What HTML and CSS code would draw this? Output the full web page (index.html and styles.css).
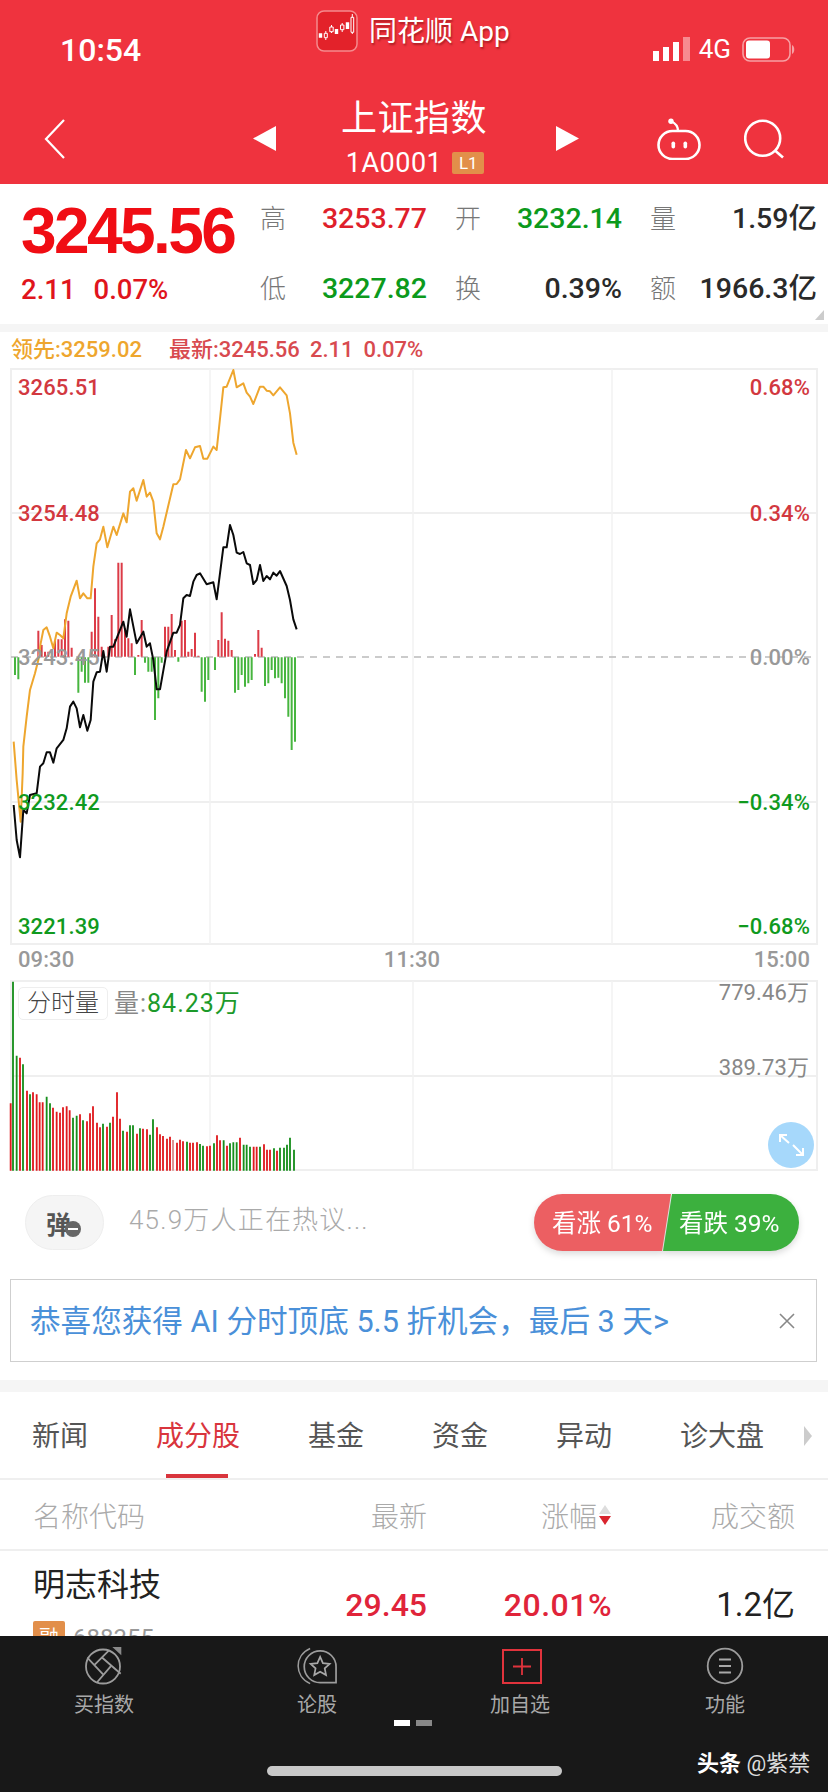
FILE: index.html
```html
<!DOCTYPE html>
<html lang="zh-CN">
<head>
<meta charset="utf-8">
<title>上证指数</title>
<link rel="stylesheet" href="styles.css">
</head>
<body>
<div class="app">
  <div class="page">
    <header class="header">
      <div class="status">
        <span class="clock">10:54</span>
        <div class="source">
          <svg class="logo" viewBox="0 0 42 42">
            <rect x="1" y="1" width="40" height="40" rx="7" fill="#e3222a" stroke="#f58a8d" stroke-width="1.500"/>
            <path d="M2.800 23.300h3.400v4.400H2.800zM18.800 19h3.400v5h-3.400zM29.800 12.300h3.400V19h-3.400z" fill="#fff"/>
            <path d="M8.300 23.300h3v4.400h-3zM9.800 21v2.300M9.800 27.700V30M13.800 17h3.400v4.700h-3.400zM15.500 15v2M15.500 21.700V23M24.500 15h3.400v4.700h-3.400zM26.200 13v2M26.200 19.700V22M35 7.300h2.700v15H35zM36.300 4v3.300M36.300 22.300V24" fill="none" stroke="#fff" stroke-width="1"/>
          </svg>
          <span class="source-name">同花顺 App</span>
        </div>
        <div class="sys">
          <svg class="signal" viewBox="0 0 37 24">
            <path d="M0 14h6v10H0zM10 10h6v14h-6zM20 5h6v19h-6z" fill="#fff"/>
            <path d="M30 0h7v24h-7z" fill="#f78a90"/>
          </svg>
          <span class="net">4G</span>
          <svg class="battery" viewBox="0 0 53 25">
            <rect x="1" y="1" width="47" height="23" rx="7" fill="none" stroke="#f7a0a4" stroke-width="1.600"/>
            <rect x="4" y="3.500" width="24" height="18" rx="3" fill="#fff"/>
            <path d="M50 8c3 1 3 8 0 9z" fill="#f7a0a4"/>
          </svg>
        </div>
      </div>
      <nav class="nav">
        <svg class="back" viewBox="0 0 22 40"><path d="M20 1 2 20l18 19" fill="none" stroke="#fff" stroke-width="2.200"/></svg>
        <svg class="tri tri-l" viewBox="0 0 23 25"><path d="M23 0v25L0 12.500z" fill="#fff"/></svg>
        <div class="title">
          <span class="title-name">上证指数</span>
          <span class="title-code">1A0001<span class="lv">L1</span></span>
        </div>
        <svg class="tri tri-r" viewBox="0 0 23 25"><path d="M0 0v25l23-12.500z" fill="#fff"/></svg>
        <svg class="robot" viewBox="0 0 44 42">
          <path d="M21 13C21 8 18 5 14 3.300" fill="none" stroke="#fff" stroke-width="2.200"/>
          <circle cx="14" cy="3.300" r="2.700" fill="#fff"/>
          <rect x="1.500" y="13" width="41" height="28" rx="14" fill="none" stroke="#fff" stroke-width="2.600"/>
          <rect x="14.500" y="23.500" width="3.600" height="7" rx="1.800" fill="#fff"/>
          <rect x="26.500" y="23.500" width="3.600" height="7" rx="1.800" fill="#fff"/>
        </svg>
        <svg class="search" viewBox="0 0 42 40">
          <circle cx="18.700" cy="19.300" r="17.500" fill="none" stroke="#fff" stroke-width="2.600"/>
          <path d="m31 31.500 8 7" stroke="#fff" stroke-width="2.600"/>
        </svg>
      </nav>
    </header>

    <section class="quote">
      <div class="last">
        <span class="last-price">3245.56</span>
        <span class="last-change"><span>2.11</span><span>0.07%</span></span>
      </div>
      <div class="stats">
        <span class="k">高</span><span class="v up">3253.77</span>
        <span class="k">开</span><span class="v down">3232.14</span>
        <span class="k">量</span><span class="v">1.59亿</span>
        <span class="k">低</span><span class="v down">3227.82</span>
        <span class="k">换</span><span class="v">0.39%</span>
        <span class="k">额</span><span class="v">1966.3亿</span>
      </div>
      <i class="corner"></i>
    </section>

    <section class="chart">
      <div class="legend">
        <span class="lead">领先:3259.02</span>
        <span class="newest"><span>最新:3245.56</span><span>2.11</span><span>0.07%</span></span>
      </div>
      <svg class="price-svg" viewBox="0 365 828 610">
        <path class="grid" d="M11 369H817V944H11zM11 513H817M11 802H817"/>
        <path class="grid-v" d="M210 369V944M413 369V944M612 369V944"/>
        <path class="dash" d="M11 657H817"/>
        <g transform="translate(0 350) scale(.33333)">
          <path class="bar-r" d="M115 920v-78M125 920v-35M135 920v-15M145 920v-15M165 920v-50M175 920v-52M185 920v-52M195 920v-112M205 920v-108M215 920v-27M275 920v-75M285 920v-205M295 920v-120M305 920v-30M325 920v-30M335 920v-125M345 920v-52M355 920v-282M365 920v-282M375 920v-85M385 920v-55M395 920v-40M415 920v-5M425 920v-110M495 920v-90M505 920v-90M515 920v-128M525 920v-20M545 920v-108M555 920v-110M565 920v-15M575 920v-23M585 920v-72M595 920v-3M655 920v-50M665 920v-133M675 920v-54M685 920v-48M695 920v-20M765 920v-8M775 920v-80M785 920v-27"/>
          <path class="bar-g" d="M45 922v53M55 922v66M235 922v106M245 922v43M255 922v76M265 922v76M405 922v53M435 922v16M445 922v43M455 922v43M465 922v188M475 922v123M485 922v16M535 922v13M605 922v103M615 922v133M625 922v68M645 922v38M705 922v106M715 922v98M725 922v53M735 922v88M745 922v78M755 922v68M795 922v86M805 922v78M815 922v38M825 922v63M835 922v61M845 922v78M855 922v123M865 922v178M875 922v278M885 922v253"/>
          <path class="line-o" d="M41 1175 50 1290 62 1415 68 1270 70 1190 80 1100 90 1020 105 970 115 930 122 880 130 840 140 832 150 860 160 895 170 848 180 855 190 865 200 790 212 740 230 692 240 745 250 730 262 745 272 745 280 650 290 580 300 568 310 530 322 592 340 530 350 555 370 490 380 517 390 425 400 415 410 452 430 390 440 440 450 428 460 455 470 550 480 568 490 530 520 403 530 402 540 388 558 300 570 325 585 292 600 288 610 326 622 326 640 290 650 300 670 112 680 110 700 60 710 112 730 100 740 128 750 140 760 162 780 110 790 110 800 122 810 124 820 136 840 112 860 136 870 190 880 278 890 314"/>
          <path class="line-k" d="M41 1365 50 1470 60 1522 70 1380 80 1390 90 1335 110 1330 120 1250 130 1240 140 1207 150 1207 160 1238 170 1195 190 1170 200 1135 210 1070 220 1055 230 1075 240 1132 250 1095 262 1142 272 1110 280 995 290 967 300 965 310 903 320 965 330 890 340 890 370 815 380 860 390 778 410 880 430 845 440 890 450 880 460 930 470 1018 480 1018 500 905 520 848 530 848 540 825 550 745 560 735 570 738 580 695 590 675 600 670 620 703 640 697 650 748 670 592 680 592 690 525 700 555 710 608 720 612 730 606 740 640 750 645 760 702 770 690 780 645 790 693 800 678 810 688 820 668 830 677 840 663 860 708 870 750 880 808 890 838"/>
        </g>
        <text class="ax ax-r" x="18" y="395">3265.51</text>
        <text class="ax ax-r" x="18" y="521">3254.48</text>
        <text class="ax ax-n" x="18" y="665">3243.45</text>
        <text class="ax ax-g" x="18" y="810">3232.42</text>
        <text class="ax ax-g" x="18" y="934">3221.39</text>
        <text class="ax ax-r end" x="810" y="395">0.68%</text>
        <text class="ax ax-r end" x="810" y="521">0.34%</text>
        <text class="ax ax-n end" x="810" y="665">0.00%</text>
        <text class="ax ax-g end" x="810" y="810">−0.34%</text>
        <text class="ax ax-g end" x="810" y="934">−0.68%</text>
        <text class="ax ax-n" x="18" y="967">09:30</text>
        <text class="ax ax-n mid" x="412" y="967">11:30</text>
        <text class="ax ax-n end" x="810" y="967">15:00</text>
      </svg>
      <div class="vol">
        <svg class="vol-svg" viewBox="0 975 828 197">
          <path class="grid" d="M11 981H817V1170H11zM11 1076H817"/>
          <path class="grid-v" d="M210 981V1170M413 981V1170M612 981V1170"/>
          <g transform="translate(0 970) scale(.33333)">
            <path class="vr" d="M32 602V400M60 602V263M81 602V362M99 602V367M110 602V373M119 602V397M128 602V397M159 602V413M170 602V425M180 602V428M189 602V412M200 602V409M209 602V421M240 602V433M261 602V454M270 602V430M279 602V409M291 602V458M300 602V472M321 602V470M339 602V440M351 602V367M360 602V446M381 602V485M411 602V491M429 602V476M441 602V478M471 602V472M480 602V493M489 602V498M501 602V506M510 602V500M531 602V518M540 602V509M549 602V514M570 602V518M579 602V518M591 602V517M621 602V529M630 602V527M651 602V496M660 602V511M681 602V527M720 602V503M761 602V530M770 602V530M792 602V523M801 602V539M810 602V539M831 602V542"/>
            <path class="vr vr-faint" d="M519 602V510"/>
            <path class="vg" d="M39 602V35M50 602V257M69 602V283M90 602V373M140 602V380M150 602V400M219 602V443M230 602V437M249 602V451M309 602V461M330 602V458M369 602V482M390 602V466M399 602V466M420 602V475M450 602V494M459 602V448M561 602V515M600 602V522M609 602V527M642 602V520M671 602V511M690 602V520M700 602V517M710 602V517M731 602V524M740 602V524M750 602V530M780 602V530M822 602V535M840 602V533M852 602V533M861 602V524M870 602V503M882 602V539"/>
          </g>
          <text class="ax ax-m end" x="809" y="1000">779.46万</text>
          <text class="ax ax-m end" x="809" y="1075">389.73万</text>
        </svg>
        <div class="vol-tag">
          <span class="vol-type">分时量</span>
          <span class="vol-val"><b>量:</b>84.23万</span>
        </div>
        <svg class="expand" viewBox="0 0 46 46">
          <circle cx="23" cy="23" r="23" fill="#a6d8fb"/>
          <path d="m12 13 9 8M12 20v-7h7M35 33l-10-10M35 26v7h-7" fill="none" stroke="#fff" stroke-width="2"/>
        </svg>
      </div>
    </section>

    <section class="social">
      <div class="danmu"><span>弹</span><i class="danmu-off"></i></div>
      <span class="hot">45.9万人正在热议...</span>
      <div class="vote">
        <span class="vote-up">看涨 61%</span>
        <span class="vote-down">看跌 39%</span>
      </div>
    </section>

    <div class="promo">
      <span class="promo-text">恭喜您获得 AI 分时顶底 5.5 折机会，最后 3 天&gt;</span>
      <svg class="close" viewBox="0 0 16 16"><path d="m1 1 14 14M15 1 1 15" stroke="#888" stroke-width="1.600"/></svg>
    </div>

    <div class="band"></div>

    <div class="tabs">
      <span class="tab t1">新闻</span>
      <span class="tab on">成分股</span>
      <span class="tab">基金</span>
      <span class="tab">资金</span>
      <span class="tab">异动</span>
      <span class="tab">诊大盘</span>
      <i class="tab-more"></i>
    </div>

    <div class="row thead">
      <span class="c-name">名称代码</span>
      <span class="c-a">最新</span>
      <span class="c-b">涨幅<i class="sort"><i class="s-up"></i><i class="s-down"></i></i></span>
      <span class="c-c">成交额</span>
    </div>

    <div class="row item">
      <div class="c-name">
        <span class="stock">明志科技</span>
        <span class="code"><i class="rong">融</i>688355</span>
      </div>
      <span class="c-a num up2">29.45</span>
      <span class="c-b num up2 wide">20.01%</span>
      <span class="c-c num dark">1.2亿</span>
    </div>
  </div>

  <footer class="bottom">
    <div class="actions">
      <div class="act">
        <svg viewBox="0 0 40 38">
          <circle cx="19" cy="19.500" r="17" fill="none" stroke="#9c9c9c" stroke-width="1.800"/>
          <path d="M3.300 10.700 20 28.300M10 18.300l15-15M18.300 10.700l18.400 16M26.700 19.300 13.300 35" fill="none" stroke="#9c9c9c" stroke-width="1.800"/>
          <path d="M28.300 0h9v8.300z" fill="#8a8a8a"/>
        </svg>
        <span>买指数</span>
      </div>
      <div class="act">
        <svg viewBox="0 0 42 38">
          <path d="M13.800.7C-3 8-3 30 13.800 37.500" fill="none" stroke="#9c9c9c" stroke-width="1.600"/>
          <path d="M41 36.500H24.300A16.700 16.700 0 1 1 41 19.800z" fill="none" stroke="#9c9c9c" stroke-width="1.800"/>
          <path d="M24.300 9.500 27.200 16 34.300 16.800 29.100 21.500 30.500 28.500 24.300 25 18.100 28.500 19.500 21.500 14.300 16.800 21.400 16z" fill="none" stroke="#a8a8a8" stroke-width="1.800"/>
        </svg>
        <span>论股</span>
      </div>
      <div class="act act-add">
        <svg viewBox="0 0 40 38"><rect x="1" y="3" width="38" height="33" fill="none" stroke="#e0333c" stroke-width="2"/><path d="M20 11v17M11 19.500h18" stroke="#e0333c" stroke-width="1.800"/></svg>
        <span>加自选</span>
      </div>
      <div class="act act-last">
        <svg viewBox="0 0 40 38"><circle cx="20" cy="19" r="17.300" fill="none" stroke="#9c9c9c" stroke-width="1.800"/><path d="M14 12.500h12M14 19h12M14 25.500h12" stroke="#a8a8a8" stroke-width="1.800"/></svg>
        <span>功能</span>
      </div>
    </div>
    <div class="dots"><i class="dot on"></i><i class="dot"></i></div>
    <div class="home"></div>
    <span class="mark"><b>头条</b> @紫禁</span>
  </footer>
</div>
</body>
</html>
```
FILE: styles.css
```css
* { box-sizing: border-box; }
html, body { margin: 0; padding: 0; background: #fff; }
body { font-family: Roboto, "Noto Sans CJK SC", sans-serif; color: #222; }
i { font-style: normal; display: block; }
svg { display: block; }
.app { width: 828px; height: 1792px; display: flex; flex-direction: column; overflow: hidden; }
.page { flex: 1; overflow: hidden; min-height: 0; }

.header { height: 184px; background: #ef333e; color: #fff; display: flex; flex-direction: column; }
.status { height: 78px; display: grid; grid-template-columns: 316px auto 1fr; }
.clock { font-size: 32px; font-weight: 500; padding: 31px 0 0 60px; line-height: 38px; }
.source { display: flex; align-items: flex-start; padding-top: 10px; gap: 11px; }
.logo { width: 42px; height: 42px; }
.source-name { font-size: 28px; line-height: 44px; color: #fff; text-shadow: 1px 2px 2px rgba(90,0,0,.45); }
.sys { display: flex; justify-content: flex-end; align-items: center; padding: 20px 33px 0 0; gap: 9px; height: 78px; }
.signal { width: 37px; height: 24px; }
.net { font-size: 26px; line-height: 28px; }
.battery { width: 53px; height: 25px; margin-left: 2px; }

.nav { height: 106px; display: flex; align-items: flex-start; }
.back { width: 22px; height: 40px; margin: 41px 0 0 44px; }
.tri { width: 23px; height: 25px; margin-top: 48px; }
.tri-l { margin-left: 187px; }
.title { width: 280px; display: flex; flex-direction: column; align-items: center; }
.title-name { font-size: 36px; line-height: 50px; margin-top: 16px; padding-right: 4px; letter-spacing: .5px; }
.title-code { font-size: 27px; line-height: 34px; margin-top: 2px; display: flex; align-items: center; gap: 10px; color: #fff; padding-right: 2px; letter-spacing: .5px; }
.lv { display: block; background: #e28f4a; font-size: 17px; line-height: 22px; width: 32px; height: 22px; text-align: center; border-radius: 2px; letter-spacing: 0; }
.robot { width: 44px; height: 42px; margin: 40px 0 0 78px; }
.search { width: 42px; height: 40px; margin: 41px 0 0 43px; }

.quote { height: 140px; position: relative; display: flex; background: #fff; }
.last { width: 260px; padding-left: 21px; display: flex; flex-direction: column; }
.last-price { font-family: "Liberation Sans", sans-serif; font-size: 64px; font-weight: 700; color: #f00d14; line-height: 66px; margin-top: 14px; letter-spacing: -2.600px; }
.last-change { display: flex; gap: 18px; font-size: 27.500px; font-weight: 500; line-height: 34px; color: #e0141c; margin-top: 9px; }
.stats { display: grid; grid-template-columns: 26px 141px 54px 141px 54px 141px; grid-auto-rows: 70px; align-items: center; align-content: start; flex: 1; }
.k { font-size: 26px; color: #777; font-weight: 300; line-height: 70px; text-align: right; }
.v { font-size: 28.500px; text-align: right; line-height: 70px; color: #2a2a2a; font-weight: 500; }
.v.up { color: #df1f2b; }
.v.down { color: #0c9a1c; }
.corner { position: absolute; right: 4px; bottom: 4px; width: 0; height: 0; border-left: 9px solid transparent; border-bottom: 10px solid #ccc; }

.chart { border-top: 8px solid #f5f5f5; }
.legend { height: 33px; display: flex; padding-left: 11px; gap: 27px; font-size: 22px; font-weight: 500; line-height: 36px; }
.lead { color: #eea62e; }
.newest { color: #d84a4f; display: flex; gap: 10px; }
.price-svg { width: 828px; height: 610px; }
.grid { fill: none; stroke: #efefef; stroke-width: 2; }
.grid-v { fill: none; stroke: #f2f2f2; stroke-width: 1.500; }
.dash { fill: none; stroke: #bbb; stroke-width: 1.500; stroke-dasharray: 7 6; }
.bar-r { fill: none; stroke: #dc3b47; stroke-width: 6; }
.bar-g { fill: none; stroke: #47b53f; stroke-width: 6; }
.line-o { fill: none; stroke: #eea62e; stroke-width: 6; stroke-linejoin: round; }
.line-k { fill: none; stroke: #0a0a0a; stroke-width: 6; stroke-linejoin: round; }
.ax { font-family: Roboto, "Noto Sans CJK SC", sans-serif; font-size: 22px; font-weight: 500; letter-spacing: .1px; }
.ax-r { fill: #d2383f; }
.ax-g { fill: #109a1e; }
.ax-n { fill: #999; }
.ax-m { fill: #888; font-weight: 400; }
.end { text-anchor: end; }
.mid { text-anchor: middle; }
.vol { position: relative; height: 197px; }
.vol-svg { width: 828px; height: 197px; }
.vr { fill: none; stroke: #e01a1e; stroke-width: 5.500; }
.vr-faint { stroke: #d98a8a; }
.vg { fill: none; stroke: #178f1c; stroke-width: 5.500; }
.vol-tag { position: absolute; left: 18px; top: 12px; display: flex; align-items: center; gap: 6px; }
.vol-type { width: 90px; height: 33px; border: 1px solid #eee; border-radius: 5px; background: #fff; font-size: 24px; line-height: 31px; text-align: center; color: #444; font-weight: 300; }
.vol-val { font-size: 25px; color: #1c9a2a; letter-spacing: 1px; line-height: 30px; }
.vol-val b { font-weight: 400; color: #888; }
.expand { position: absolute; left: 768px; top: 147px; width: 46px; height: 46px; }

.social { height: 107px; display: flex; align-items: center; padding: 0 0 6px 25px; }
.danmu { width: 79px; height: 55px; border-radius: 28px; background: #f5f5f5; border: 1px solid #eee; display: flex; align-items: center; justify-content: center; position: relative; font-size: 25px; color: #555; font-weight: 700; padding-right: 12px; }
.danmu-off { position: absolute; left: 39px; top: 25px; width: 16px; height: 16px; border-radius: 50%; background: #666; }
.danmu-off::after { content: ""; display: block; width: 10px; height: 2px; margin: 7px 3px; background: #fff; }
.hot { font-size: 26px; line-height: 34px; color: #aaa; margin-left: 25px; width: 405px; letter-spacing: 1.200px; font-weight: 300; padding-bottom: 6px; height: 40px; }
.vote { display: flex; height: 57px; filter: drop-shadow(0 3px 3px rgba(0,0,0,.14)); color: #fff; font-size: 24.500px; line-height: 59px; white-space: nowrap; }
.vote-up { width: 137px; background: #ec5f62; border-radius: 29px 0 0 29px; clip-path: polygon(0 0, 100% 0, calc(100% - 9px) 100%, 0 100%); padding-left: 18px; }
.vote-down { width: 136px; margin-left: -8px; background: #3cb03e; border-radius: 0 29px 29px 0; clip-path: polygon(9px 0, 100% 0, 100% 100%, 0 100%); padding-left: 16px; }

.promo { height: 83px; margin: 0 11px 0 10px; border: 1.500px solid #cfcfcf; display: flex; align-items: center; padding: 0 21px 3px 19px; justify-content: space-between; }
.promo-text { font-size: 30.600px; color: #4a90d9; font-weight: 400; }
.close { width: 16px; height: 16px; margin-top: 3px; }
.band { height: 12px; margin-top: 18px; background: #f5f5f5; }

.tabs { height: 88px; border-bottom: 2px solid #efefef; position: relative; display: flex; gap: 68px; padding: 0 0 0 32px; }
.tab { font-size: 28px; line-height: 90px; color: #555; font-weight: 400; }
.tab.on { color: #d9353d; position: relative; }
.tab.on::after { content: ""; position: absolute; left: 10px; width: 62px; bottom: 0; height: 4px; background: #d9353d; }
.tab-more { position: absolute; left: 804px; top: 34px; width: 0; height: 0; border-left: 8px solid #ccc; border-top: 10px solid transparent; border-bottom: 10px solid transparent; }

.row { display: grid; grid-template-columns: 254px 140px 185px 183px; padding-left: 33px; align-items: center; }
.thead { height: 71px; border-bottom: 2px solid #efefef; font-size: 28px; color: #aaa; font-weight: 300; }
.c-a, .c-b, .c-c { text-align: right; }
.c-b { display: flex; justify-content: flex-end; align-items: center; gap: 2px; }
.sort { width: 13px; display: flex; flex-direction: column; gap: 2px; }
.s-up, .s-down { width: 0; height: 0; border-left: 6px solid transparent; border-right: 6px solid transparent; }
.s-up { border-bottom: 9px solid #ddd; }
.s-down { border-top: 9px solid #d9252e; }
.item { height: 140px; align-items: start; }
.stock { display: block; font-size: 32px; line-height: 44px; margin-top: 12px; color: #222; font-weight: 400; }
.code { display: flex; gap: 8px; align-items: center; margin-top: 14px; font-size: 24px; color: #999; line-height: 34px; }
.rong { width: 32px; height: 34px; background: #e28f4a; color: #fff; font-size: 20px; text-align: center; line-height: 34px; border-radius: 2px; }
.num { font-size: 32px; line-height: 40px; margin-top: 34px; font-weight: 500; }
.wide { letter-spacing: .5px; }
.up2 { color: #e0243a; }
.dark { color: #222; font-weight: 400; font-size: 33px; }

.bottom { height: 156px; background: #181818; position: relative; flex: none; }
.actions { display: grid; grid-template-columns: 208px 218px 188px 214px; }
.act { display: flex; flex-direction: column; align-items: center; color: #a8a8a8; font-size: 20px; padding-top: 11px; }
.act-add svg { margin-left: 4px; }
.act-last { padding-left: 8px; }
.act svg { width: 40px; height: 38px; }
.act span { line-height: 30px; margin-top: 5px; }
.dots { display: flex; gap: 6px; position: absolute; left: 394px; top: 84px; }
.dot { width: 16px; height: 6px; background: #888; }
.dot.on { background: #fff; }
.home { position: absolute; left: 267px; top: 130px; width: 295px; height: 10px; border-radius: 5px; background: #c8c8c8; }
.mark { position: absolute; left: 697px; top: 113px; font-size: 22px; color: #ddd; line-height: 30px; white-space: nowrap; }
.mark b { color: #fff; font-weight: 700; }
```
